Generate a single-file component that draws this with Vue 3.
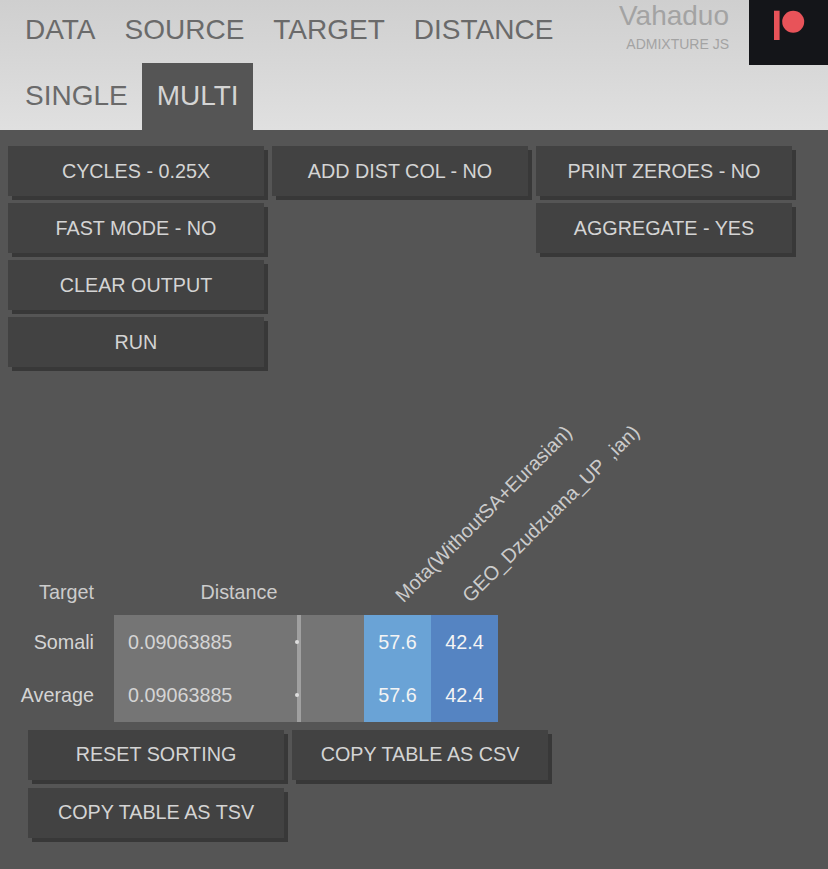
<script setup>
const topTabs = ['DATA', 'SOURCE', 'TARGET', 'DISTANCE']
const subTabs = ['SINGLE', 'MULTI']
const rows = [
  { name: 'Somali', dist: '0.09063885', a: '57.6', b: '42.4' },
  { name: 'Average', dist: '0.09063885', a: '57.6', b: '42.4' }
]
</script>

<template>
  <div class="page">
    <header class="header">
      <nav class="tabs">
        <div class="tab-row">
          <span v-for="t in topTabs" :key="t" class="tab">{{ t }}</span>
        </div>
        <div class="tab-row second">
          <span v-for="t in subTabs" :key="t" class="tab" :class="{ active: t === 'MULTI' }">{{ t }}</span>
        </div>
      </nav>
      <div class="brand">
        <div class="brand-name">Vahaduo</div>
        <div class="brand-sub">ADMIXTURE JS</div>
      </div>
      <div class="patreon">
        <svg width="79" height="65" viewBox="0 0 79 65">
          <rect x="25" y="10.7" width="5.6" height="29.3" fill="#e85359" />
          <circle cx="44.2" cy="21.7" r="11" fill="#e85359" />
        </svg>
      </div>
    </header>

    <section class="controls">
      <button class="btn">CYCLES - 0.25X</button>
      <button class="btn">ADD DIST COL - NO</button>
      <button class="btn">PRINT ZEROES - NO</button>
      <button class="btn">FAST MODE - NO</button>
      <span></span>
      <button class="btn">AGGREGATE - YES</button>
      <button class="btn">CLEAR OUTPUT</button>
      <span></span>
      <span></span>
      <button class="btn">RUN</button>
    </section>

    <section class="result">
      <div class="table">
        <div class="th label">Target</div>
        <div class="th center">Distance</div>
        <div class="th rot"><span>Mota(WithoutSA+Eurasian)</span></div>
        <div class="th rot"><span>GEO_Dzudzuana_UP<i class="gap"></i>,ian)</span></div>

        <template v-for="r in rows" :key="r.name">
          <div class="td label">{{ r.name }}</div>
          <div class="td dist">
            {{ r.dist }}
            <i class="bar"></i>
            <i class="dot"></i>
          </div>
          <div class="td pct a">{{ r.a }}</div>
          <div class="td pct b">{{ r.b }}</div>
        </template>
      </div>
      <div class="actions">
        <button class="btn">RESET SORTING</button>
        <button class="btn">COPY TABLE AS CSV</button>
        <button class="btn">COPY TABLE AS TSV</button>
      </div>
    </section>
  </div>
</template>

<style>
html, body { margin: 0; background: #555555; }
</style>

<style scoped>
.page {
  width: 828px;
  height: 869px;
  overflow: hidden;
  background: #555555;
  font-family: "Liberation Sans", Arial, sans-serif;
  color: #d4d4d4;
}
.header {
  height: 130px;
  display: flex;
  background: linear-gradient(#cfcfcf, #e0e0e0);
}
.tabs { flex: 1; padding-left: 10.5px; }
.tab-row { display: flex; height: 63px; }
.tab-row.second { height: 67px; }
.tab {
  padding: 11px 14.5px 0;
  font-size: 28px;
  line-height: 38px;
  color: #6a6a6a;
}
.second .tab { padding-top: 14px; }
.tab.active { background: #555555; color: #d4d4d4; }
.brand { padding: 0 20px 0 0; text-align: right; }
.brand-name { font-size: 28px; line-height: 31px; color: #a3a3a3; }
.brand-sub { font-size: 14px; line-height: 26px; color: #a3a3a3; }
.patreon { width: 79px; height: 65px; background: #141519; }
.patreon svg { display: block; }

.controls {
  display: grid;
  grid-template-columns: repeat(3, 256px);
  column-gap: 8px;
  row-gap: 7px;
  padding: 16px 0 0 8px;
}
.btn {
  display: block;
  width: 256px;
  height: 50px;
  padding: 0;
  border: 0;
  background: #424242;
  box-shadow: 4px 4px 0 #383838;
  color: #d4d4d4;
  font: 19.75px "Liberation Sans", Arial, sans-serif;
}

.result { padding: 0; margin-top: 205px; }
.table {
  display: grid;
  grid-template-columns: 114px 250px 67px 67px;
  grid-template-rows: 43px 53px 54px;
  font-size: 19.75px;
}
.th { display: flex; align-items: center; padding-bottom: 2px; box-sizing: border-box; color: #cccccc; }
.label { justify-content: flex-end; padding-right: 20px; }
.th.center { justify-content: center; }
.rot { position: relative; }
.rot span {
  position: absolute;
  left: 43px;
  bottom: 8px;
  white-space: nowrap;
  transform-origin: 0 100%;
  transform: rotate(-45deg);
}
.gap { display: inline-block; width: 9px; }
.td { display: flex; align-items: center; box-sizing: border-box; padding-top: 1px; color: #d4d4d4; }
.dist { position: relative; background: #757575; padding-left: 14px; }
.bar { position: absolute; left: 183px; top: 0; bottom: 0; width: 4px; background: #a0a0a0; }
.dot { position: absolute; left: 181px; top: 50%; width: 4px; height: 4px; margin-top: -2px; border-radius: 50%; background: #dddddd; }
.pct { justify-content: center; color: #f4f4f4; }
.a { background: #6aa3d6; }
.b { background: #5584c2; }

.actions {
  display: grid;
  grid-template-columns: repeat(2, 256px);
  column-gap: 8px;
  row-gap: 8px;
  padding: 8px 0 0 28px;
}
.actions .btn { padding-bottom: 2px; }
</style>
